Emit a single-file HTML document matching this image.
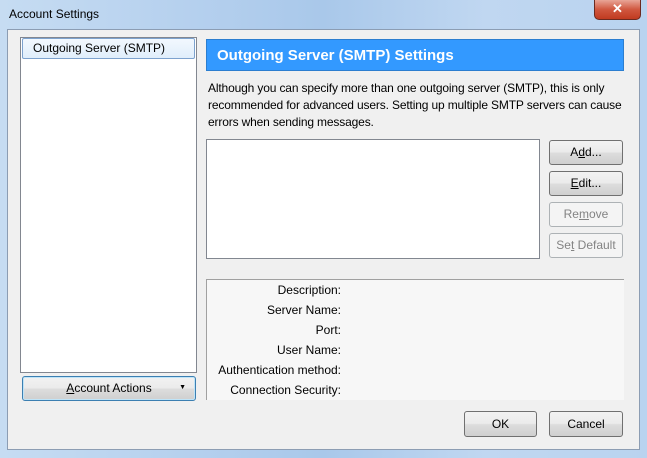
<!DOCTYPE html>
<html><head><style>
*{box-sizing:border-box;margin:0;padding:0}
body{width:647px;height:458px;overflow:hidden;font-family:"Liberation Sans",sans-serif;font-size:12px;color:#000;position:relative;background:linear-gradient(90deg,#c6dcf2 0%,#b5d0ee 30%,#a9c8ea 50%,#c0d7f1 75%,#b9d3ef 100%)}
.abs{position:absolute}
.title{left:9px;top:7px;font-size:12px;color:#000}
.close{left:594px;top:0;width:47px;height:20px;border:1px solid #6b2a20;border-top:none;border-radius:0 0 5px 5px;background:linear-gradient(#e8a597,#d0573f 50%,#c03a20);color:#fff;font-weight:bold;font-size:13px;text-align:center;line-height:18px}
.client{left:7px;top:29px;width:633px;height:421px;background:#f0f0f0;border:1px solid #8c9db3}
.list{left:20px;top:37px;width:177px;height:336px;background:#fff;border:1px solid #828790}
.sel{left:22px;top:38px;width:173px;height:21px;border:1px solid #7da2ce;border-radius:2px;background:linear-gradient(#f2f8fe,#e0eefb);padding-left:10px;line-height:19px}
.btn{border:1px solid #707070;border-radius:3px;background:linear-gradient(#f2f2f2 0%,#ebebeb 48%,#dddddd 52%,#cfcfcf 100%);text-align:center;line-height:22px;font-size:12px}
.dis{border-color:#adb2b5;background:#f4f4f4;color:#838383}
.hdr{left:206px;top:39px;width:418px;height:32px;background:#3399ff;border:1px solid #2b7ed0;color:#fff;font-weight:bold;font-size:15px;padding-left:10px;line-height:32px}
.desc{left:208px;top:80px;width:425px;line-height:17px;font-size:12px;letter-spacing:-0.15px}
.box{left:206px;top:139px;width:334px;height:120px;background:#fff;border:1px solid #828790}
.det{left:206px;top:279px;width:418px;height:121px;background:#f7f7f7;border-top:1px solid #a0a0a0;border-left:1px solid #a0a0a0}
.lab{position:absolute;right:283px;width:160px;text-align:right}
u{text-decoration:underline}
</style></head><body>
<div class="abs title">Account Settings</div>
<div class="abs close">✕</div>
<div class="abs client"></div>
<div class="abs list"></div>
<div class="abs sel">Outgoing Server (SMTP)</div>
<div class="abs btn" style="left:22px;top:376px;width:174px;height:25px;border-color:#3c7fb1;box-shadow:inset 0 0 0 1px #bfe4f8"><u>A</u>ccount Actions<span style="position:absolute;right:9px;top:0;font-size:7px">▼</span></div>
<div class="abs hdr">Outgoing Server (SMTP) Settings</div>
<div class="abs desc">Although you can specify more than one outgoing server (SMTP), this is only recommended for advanced users. Setting up multiple SMTP servers can cause errors when sending messages.</div>
<div class="abs box"></div>
<div class="abs btn" style="left:549px;top:140px;width:74px;height:25px">A<u>d</u>d...</div>
<div class="abs btn" style="left:549px;top:171px;width:74px;height:25px"><u>E</u>dit...</div>
<div class="abs btn dis" style="left:549px;top:202px;width:74px;height:25px">Re<u>m</u>ove</div>
<div class="abs btn dis" style="left:549px;top:233px;width:74px;height:25px">Se<u>t</u> Default</div>
<div class="abs det">
<div class="lab" style="top:3px">Description:</div>
<div class="lab" style="top:23px">Server Name:</div>
<div class="lab" style="top:43px">Port:</div>
<div class="lab" style="top:63px">User Name:</div>
<div class="lab" style="top:83px">Authentication method:</div>
<div class="lab" style="top:103px">Connection Security:</div>
</div>
<div class="abs btn" style="left:464px;top:411px;width:73px;height:26px;line-height:24px">OK</div>
<div class="abs btn" style="left:549px;top:411px;width:74px;height:26px;line-height:24px">Cancel</div>
</body></html>
